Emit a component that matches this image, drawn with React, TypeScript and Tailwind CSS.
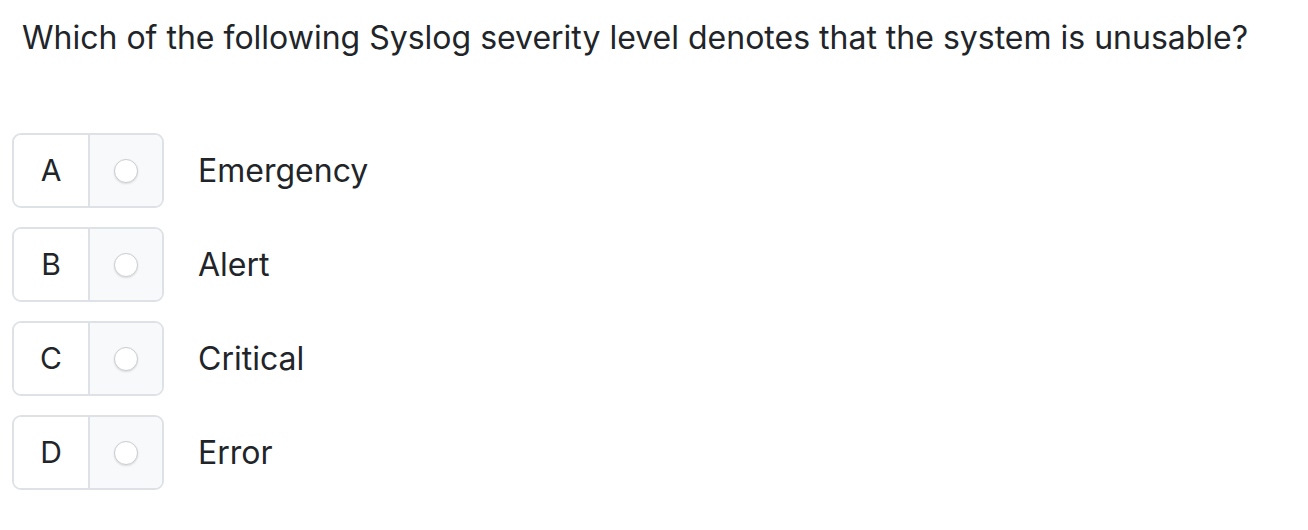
import React from "react";

const options = [
  { letter: "A", text: "Emergency" },
  { letter: "B", text: "Alert" },
  { letter: "C", text: "Critical" },
  { letter: "D", text: "Error" },
];

export default function App() {
  return (
    <div
      className="w-[1308px] h-[530px] bg-white text-[#212529]"
      style={{ fontFamily: "Inter, 'Liberation Sans', sans-serif" }}
    >
      <div className="pl-[22px] pt-[18px] text-[32px] leading-[40px]">
        Which of the following Syslog severity level denotes that the system is unusable?
      </div>
      <div className="mt-[75px] pl-[12px] flex flex-col gap-[19px]">
        {options.map((o) => (
          <div key={o.letter} className="flex items-center">
            <div className="flex h-[75px] w-[152px] rounded-[9px] border-2 border-[#dee2e6] overflow-hidden">
              <div className="w-[76px] flex items-center justify-center text-[30px] border-r-2 border-[#dee2e6] bg-white">
                {o.letter}
              </div>
              <div className="flex-1 flex items-center justify-center bg-[#f8f9fa]">
                <div className="w-[24px] h-[24px] rounded-full bg-white border border-[#c9cdd2] shadow-[0_1px_2px_rgba(0,0,0,0.12)]" />
              </div>
            </div>
            <div className="ml-[34px] text-[32px]">{o.text}</div>
          </div>
        ))}
      </div>
    </div>
  );
}
